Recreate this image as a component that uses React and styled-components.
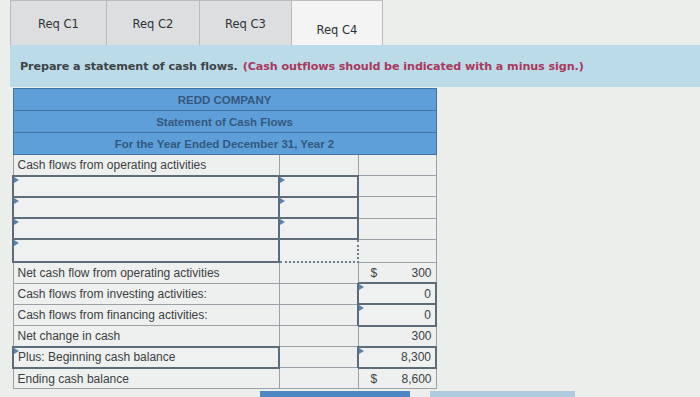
import React from "react";
import styled, { createGlobalStyle } from "styled-components";

const GlobalStyle = createGlobalStyle`
  html, body {
    margin: 0;
    padding: 0;
    background: #eceeec;
    overflow: hidden;
  }
`;

const ROW = "21.1px";

const Page = styled.div`
  width: 700px;
  height: 397px;
  padding-left: 10px;
  box-sizing: border-box;
  font-family: "DejaVu Sans", Verdana, sans-serif;
`;

const TabBar = styled.div`
  display: flex;
  height: 45px;
`;

const Tab = styled.div`
  width: ${(p) => p.$w}px;
  box-sizing: border-box;
  border: 1px solid #b9bcbe;
  border-bottom: none;
  margin-right: -1px;
  background: ${(p) => (p.$active ? "#f3f4f3" : "#dcdedf")};
  color: #2e3336;
  font-size: 11.5px;
  display: flex;
  justify-content: center;
  padding-top: ${(p) => (p.$active ? 22 : 16)}px;
`;

const Instruction = styled.div`
  height: 42px;
  background: #bcdbe9;
  display: flex;
  align-items: center;
  padding-left: 10px;
  font-size: 11.2px;
  font-weight: bold;
  color: #3c4347;
  letter-spacing: -0.1px;
`;

const Note = styled.span`
  color: #a8395c;
  margin-left: 5px;
`;

const Table = styled.table`
  margin-top: 1px;
  margin-left: 2px;
  border-collapse: collapse;
  font-family: "Liberation Sans", Arial, sans-serif;
  table-layout: fixed;
  width: 423px;
`;

const HeadCell = styled.td`
  height: ${ROW};
  padding: 0;
  background: #5e9fda;
  border: 1px solid #43729e;
  color: #34587d;
  font-weight: bold;
  font-size: 11.5px;
  text-align: center;
`;

const Cell = styled.td`
  height: ${ROW};
  padding: 0 4px;
  box-sizing: border-box;
  border: 1px solid #9aa2a7;
  background: #eef0ef;
  color: #3b4043;
  font-size: 12px;
  white-space: nowrap;
  text-align: ${(p) => (p.$num ? "right" : "left")};
  position: relative;
`;

const InputCell = styled.td`
  height: ${ROW};
  padding: 0 4px;
  box-sizing: border-box;
  border: 2px solid #5d6c79;
  background: #eff1f0;
  color: #3b4043;
  font-size: 12px;
  white-space: nowrap;
  text-align: ${(p) => (p.$num ? "right" : "left")};
  position: relative;
`;

const DottedCell = styled.td`
  height: ${ROW};
  padding: 0;
  border: 2px dotted #6c8094;
  background: #eff1f0;
`;

const Marker = styled.span`
  position: absolute;
  left: 0;
  top: 0;
  width: 0;
  height: 0;
  border-top: 3px solid transparent;
  border-bottom: 3px solid transparent;
  border-left: 5px solid #5a82ad;
`;

const Amount = styled.div`
  display: flex;
  justify-content: space-between;
  padding-left: 8px;
`;

const Buttons = styled.div`
  display: flex;
  margin-top: 2px;
  padding-left: 250px;
  gap: 20px;
`;

const NavButton = styled.div`
  width: ${(p) => p.$w}px;
  height: 8px;
  background: ${(p) => p.$bg};
`;

const Input = ({ children, num }) => (
  <InputCell $num={num}>
    <Marker />
    {children}
  </InputCell>
);

export default function App() {
  return (
    <Page>
      <GlobalStyle />
      <TabBar>
        <Tab $w={97}>Req C1</Tab>
        <Tab $w={94}>Req C2</Tab>
        <Tab $w={93}>Req C3</Tab>
        <Tab $w={92} $active>
          Req C4
        </Tab>
      </TabBar>
      <Instruction>
        Prepare a statement of cash flows.
        <Note>(Cash outflows should be indicated with a minus sign.)</Note>
      </Instruction>
      <Table>
        <colgroup>
          <col style={{ width: 266 }} />
          <col style={{ width: 79 }} />
          <col style={{ width: 78 }} />
        </colgroup>
        <tbody>
          <tr>
            <HeadCell colSpan={3}>REDD COMPANY</HeadCell>
          </tr>
          <tr>
            <HeadCell colSpan={3}>Statement of Cash Flows</HeadCell>
          </tr>
          <tr>
            <HeadCell colSpan={3}>For the Year Ended December 31, Year 2</HeadCell>
          </tr>
          <tr>
            <Cell>Cash flows from operating activities</Cell>
            <Cell />
            <Cell />
          </tr>
          {[0, 1, 2].map((i) => (
            <tr key={i}>
              <Input />
              <Input />
              <Cell />
            </tr>
          ))}
          <tr>
            <Input />
            <DottedCell />
            <Cell />
          </tr>
          <tr>
            <Cell>Net cash flow from operating activities</Cell>
            <Cell />
            <Cell>
              <Amount>
                <span>$</span>
                <span>300</span>
              </Amount>
            </Cell>
          </tr>
          <tr>
            <Cell>Cash flows from investing activities:</Cell>
            <Cell />
            <Input num>0</Input>
          </tr>
          <tr>
            <Cell>Cash flows from financing activities:</Cell>
            <Cell />
            <Input num>0</Input>
          </tr>
          <tr>
            <Cell>Net change in cash</Cell>
            <Cell />
            <Cell $num>300</Cell>
          </tr>
          <tr>
            <Input>Plus: Beginning cash balance</Input>
            <Cell />
            <Input num>8,300</Input>
          </tr>
          <tr>
            <Cell>Ending cash balance</Cell>
            <Cell />
            <Cell>
              <Amount>
                <span>$</span>
                <span>8,600</span>
              </Amount>
            </Cell>
          </tr>
        </tbody>
      </Table>
      <Buttons>
        <NavButton $w={150} $bg="#4c87c4" />
        <NavButton $w={145} $bg="#aecbe0" />
      </Buttons>
    </Page>
  );
}
